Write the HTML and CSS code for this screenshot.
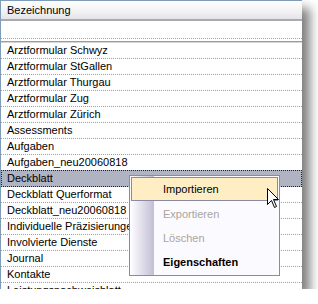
FILE: index.html
```html
<!DOCTYPE html>
<html lang="de">
<head>
    <meta charset="UTF-8">
    <title>Vorlagen</title>
    <link rel="stylesheet" href="styles.css">
</head>
<body>
    <div class="grid">
        <div class="head">Bezeichnung</div>
        <div class="filter"></div>
        <ul class="rows">
            <li>Arztformular Schwyz</li>
            <li>Arztformular StGallen</li>
            <li>Arztformular Thurgau</li>
            <li>Arztformular Zug</li>
            <li>Arztformular Zürich</li>
            <li>Assessments</li>
            <li>Aufgaben</li>
            <li>Aufgaben_neu20060818</li>
            <li class="selected">Deckblatt</li>
            <li>Deckblatt Querformat</li>
            <li>Deckblatt_neu20060818</li>
            <li>Individuelle Präzisierungen</li>
            <li>Involvierte Dienste</li>
            <li>Journal</li>
            <li>Kontakte</li>
            <li>Leistungsnachweisblatt</li>
        </ul>
    </div>

    <!-- Kontextmenü -->
    <div class="menu">
        <div class="item active">Importieren</div>
        <div class="item disabled">Exportieren</div>
        <div class="item disabled">Löschen</div>
        <div class="item bold">Eigenschaften</div>
    </div>

    <svg class="cursor" width="13" height="21" viewBox="0 0 13 21">
        <path d="M0.5 0.5 L0.5 16.5 L4.5 12.5 L7.5 19.5 L9.5 18.5 L6.5 11.5 L11.5 11.5 Z" fill="#fff" stroke="#000" stroke-width="1" stroke-linejoin="miter"/>
    </svg>
</body>
</html>
```

FILE: styles.css
```css
body {
    margin: 0;
    background: #fff;
    font-family: "Liberation Sans", Arial, sans-serif;
    font-size: 11px;
    color: #000;
}
.grid {
    width: 301px;
    height: 288px;
    border-top: 1px solid #7f9db9;
    border-left: 1px solid #7f9db9;
    background: #fff;
    overflow: hidden;
    box-shadow: 8px 8px 10px rgba(0,0,0,0.5);
}
.head {
    height: 18px;
    line-height: 18px;
    padding-left: 6px;
    background: linear-gradient(#fdfdfd, #f2f2f4 60%, #e4e4e8);
    border-bottom: 2px solid #a9a9b0;
}
.filter {
    height: 17px;
    border-bottom: 1px dotted #a0a0a0;
    margin-bottom: 2px;
}
.rows {
    list-style: none;
    margin: 0;
    padding: 1px 0 0;
    border-top: 1px solid #9c9c9c;
    background: linear-gradient(#d6d6d6, #d6d6d6) 0 0 / 100% 1px no-repeat, #fff;
}
.rows li {
    height: 15px;
    line-height: 15px;
    padding-left: 6px;
    white-space: nowrap;
    border-bottom: 1px dotted #a0a0a0;
}
.rows li.selected {
    background: #b0b3c1;
    outline: 1px dotted #222;
    outline-offset: -1px;
    margin-top: -1px;
    height: 16px;
    line-height: 17px;
}
.menu {
    position: absolute;
    left: 129px;
    top: 175px;
    width: 149px;
    padding: 1px 0;
    border: 1px solid #8c8aa3;
    background: linear-gradient(to right, #fdfcff, #c1bed4) 1px 0 / 23px 100% no-repeat, #fbfaff;
}
.item {
    height: 24px;
    line-height: 24px;
    padding-left: 33px;
}
.item.active {
    height: 22px;
    line-height: 22px;
    margin: 0 1px 1px;
    padding-left: 31px;
    border: 1px solid #8a8aa2;
    background: #ffeec4;
}
.item.disabled {
    color: #a9a59e;
}
.item.bold {
    font-weight: bold;
}
.cursor {
    position: absolute;
    left: 267px;
    top: 188px;
}
```
